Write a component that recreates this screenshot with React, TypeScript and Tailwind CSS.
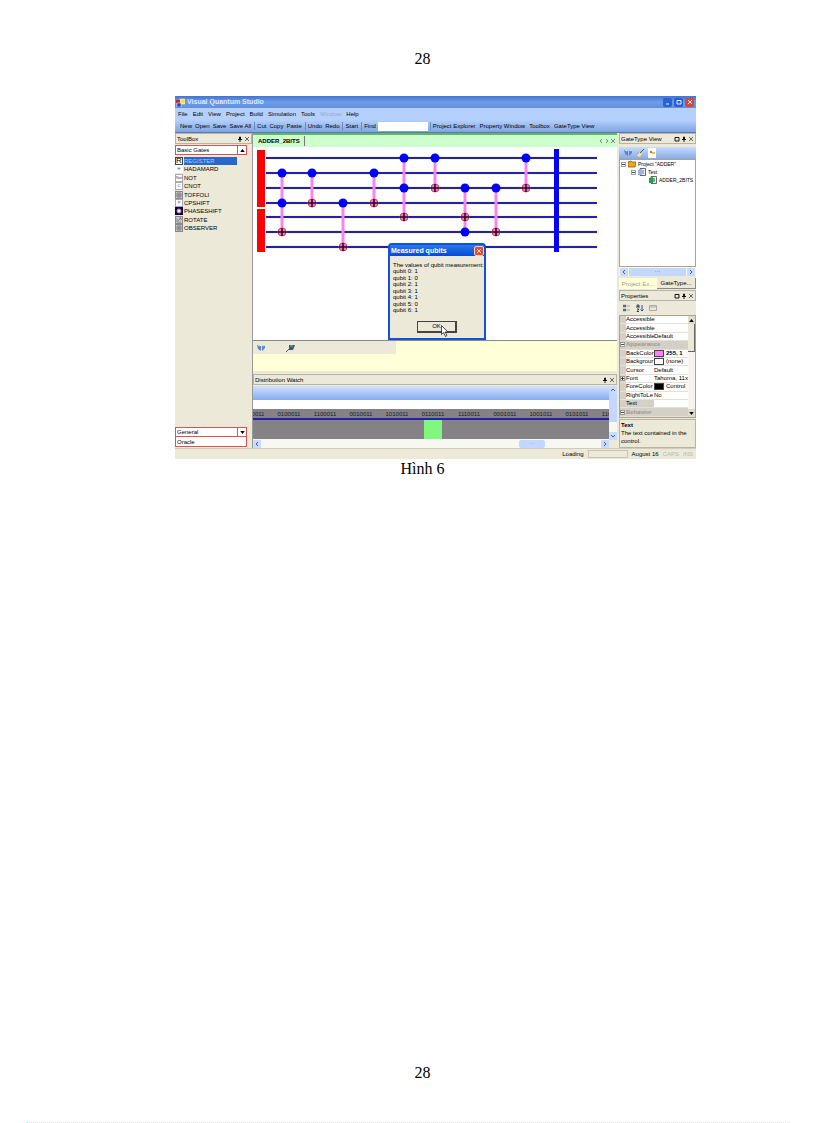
import type { ReactNode } from "react";
import clsx from "clsx";

const MENU = ["File", "Edit", "View", "Project", "Build", "Simulation", "Tools", "Window", "Help"];

const TOOLBAR_LEFT = [
  ["New", "Open", "Save", "Save All"],
  ["Cut", "Copy", "Paste"],
  ["Undo", "Redo"],
  ["Start"],
];

const TOOLBAR_RIGHT = ["Project Explorer", "Property Window", "Toolbox", "GateType View"];

const GATES = [
  { name: "REGISTER", icon: "R" },
  { name: "HADAMARD", icon: "H" },
  { name: "NOT", icon: "Not" },
  { name: "CNOT", icon: "C" },
  { name: "TOFFOLI", icon: "grid" },
  { name: "CPSHIFT", icon: "P" },
  { name: "PHASESHIFT", icon: "phase" },
  { name: "ROTATE", icon: "rotate" },
  { name: "OBSERVER", icon: "grid" },
];

const WIRES = [11, 26, 41, 56, 70, 85, 100];

// column x, control wires, target wires
const COLUMNS = [
  { x: 29, dots: [1, 3], targets: [5] },
  { x: 59, dots: [1], targets: [3] },
  { x: 90, dots: [3], targets: [6] },
  { x: 121, dots: [1], targets: [3] },
  { x: 151, dots: [0, 2], targets: [4] },
  { x: 182, dots: [0], targets: [2] },
  { x: 212, dots: [2, 5], targets: [4] },
  { x: 243, dots: [2], targets: [5] },
  { x: 273, dots: [0], targets: [2] },
];

const STATES = [
  "1000011",
  "0100011",
  "1100011",
  "0010011",
  "1010011",
  "0110011",
  "1110011",
  "0001011",
  "1001011",
  "0101011",
  "1101011",
];

const QUBITS = [1, 0, 1, 1, 1, 0, 1];

type Property = { name: string; value?: string; swatch?: string; group?: boolean; expand?: boolean; selected?: boolean };

const PROPERTIES: Property[] = [
  { name: "Accessible" },
  { name: "Accessible" },
  { name: "Accessible", value: "Default" },
  { name: "Appearance", group: true, expand: true },
  { name: "BackColor", value: "255, 1", swatch: "bg-[#ff80ff]" },
  { name: "Backgrour", value: "(none)", swatch: "bg-white" },
  { name: "Cursor", value: "Default" },
  { name: "Font", value: "Tahoma, 11x", expand: true },
  { name: "ForeColor", value: "Control", swatch: "bg-black" },
  { name: "RightToLe", value: "No" },
  { name: "Text", selected: true },
  { name: "Behavior", group: true, expand: true },
];

function GateIcon({ icon }: { icon: string }) {
  if (icon === "phase") {
    return (
      <svg className="size-2 shrink-0" viewBox="0 0 8 8" aria-hidden="true">
        <rect width="8" height="8" fill="#180030" />
        <circle cx="4" cy="4" r="2" fill="#fff" stroke="#b080e0" />
      </svg>
    );
  }
  if (icon === "grid" || icon === "rotate") {
    return (
      <svg className="size-2 shrink-0" viewBox="0 0 8 8" aria-hidden="true">
        <rect x=".5" y=".5" width="7" height="7" fill="#d0d0d0" stroke="#888" />
        <path d={icon === "grid" ? "M1 3h6M1 5h6M3 1v6M5 1v6" : "M2 6V2M2 6h4M3 5l3-3M4 2h2v2"} stroke="#666" strokeWidth=".7" fill="none" />
      </svg>
    );
  }
  return (
    <span
      className={clsx(
        "flex size-2 shrink-0 items-center justify-center bg-white",
        icon === "R" ? "border border-[#444] text-[8px] leading-[8px]" : "text-[4px] leading-[8px] text-[#444]",
        icon !== "R" && icon !== "H" && "border border-[#a8a8b8]",
      )}
    >
      {icon}
    </span>
  );
}

function Glyph({ kind }: { kind: string }) {
  const paths: Record<string, string> = {
    close: "M1 1l4 4M5 1l-4 4",
    pin: "M2.500 1h1v2h-1zM1 3.500h4M3 3.500V6",
    square: "M1 1.500h4v3.500H1z",
    left: "M4 1L2 3l2 2",
    right: "M2 1l2 2-2 2",
    up: "M1 4l2-2 2 2",
    down: "M1 2l2 2 2-2",
    min: "M1 5h3",
  };
  return (
    <svg className="size-[6px] shrink-0" viewBox="0 0 6 6" fill="none" stroke="currentColor" strokeWidth=".9" aria-hidden="true">
      <path d={paths[kind]} />
    </svg>
  );
}

function Triangle({ up }: { up?: boolean }) {
  return (
    <svg className="h-[3px] w-[5px]" viewBox="0 0 6 4" aria-hidden="true">
      <path d={up ? "M3 0l3 4H0z" : "M0 0h6L3 4z"} />
    </svg>
  );
}

function IconButton({ label, kind, className }: { label: string; kind: string; className?: string }) {
  return (
    <button type="button" aria-label={label} className={clsx("flex items-center justify-center", className)}>
      <Glyph kind={kind} />
    </button>
  );
}

function PanelHeader({ title, square }: { title: string; square?: boolean }) {
  return (
    <header className="flex h-[11px] shrink-0 items-center gap-px border border-[#b8b4a4] bg-[#ece9d8] px-px">
      <h2 className="flex-1">{title}</h2>
      {square && <IconButton label="Maximize" kind="square" />}
      <IconButton label="Pin" kind="pin" />
      <IconButton label="Close" kind="close" className="text-[#555]" />
    </header>
  );
}

function Separator() {
  return <span className="h-2 w-px bg-[#6a8cc8]" />;
}

function MagnetIcon() {
  return (
    <svg className="h-2 w-[9px]" viewBox="0 0 9 8" aria-hidden="true">
      <path d="M0 1l4 1v5L1 5zM5 2l3-1v3L5 7z" fill="#5a86c8" />
      <path d="M1 1l2 1M6 2l2-1" stroke="#dbe8ff" />
    </svg>
  );
}

function TitleBar() {
  return (
    <div className="flex h-3 items-center bg-linear-to-b from-[#4274d0] via-[#6c9ce8] to-[#6290dc] px-px">
      <svg className="size-[9px] shrink-0" viewBox="0 0 9 9" aria-hidden="true">
        <rect x="4" y="1" width="5" height="5" fill="#ffe040" stroke="#fff" strokeWidth=".5" />
        <rect y="2" width="4" height="3" fill="#d02020" />
        <rect x="1" y="5" width="4" height="4" fill="#1840c0" stroke="#fff" strokeWidth=".5" />
      </svg>
      <h1 className="flex-1 pl-[2px] text-[7px] leading-[12px] font-bold text-[#dce8ff]">Visual Quantum Studio</h1>
      <div className="flex gap-[2px] pr-px text-white">
        <IconButton label="Minimize" kind="min" className="size-[9px] rounded-xs bg-[#2860d8]" />
        <IconButton label="Restore" kind="square" className="size-[9px] rounded-xs bg-[#2860d8]" />
        <IconButton label="Close" kind="close" className="size-[9px] rounded-xs bg-[#d84830]" />
      </div>
    </div>
  );
}

function ToolButton({ children }: { children: ReactNode }) {
  return (
    <button type="button" className="whitespace-nowrap">
      {children}
    </button>
  );
}

function Toolbar() {
  return (
    <div className="flex h-[13px] items-center gap-[2px] border-b border-[#5878b8] bg-linear-to-b from-[#b4d0fc] to-[#80a4e4] pl-[5px]">
      {TOOLBAR_LEFT.map((group) => (
        <div key={group[0]} className="flex items-center gap-[3px]">
          {group.map((name) => (
            <ToolButton key={name}>{name}</ToolButton>
          ))}
          <Separator />
        </div>
      ))}
      <label htmlFor="find">Find</label>
      <input id="find" className="h-[9px] w-[50px] bg-white px-px outline-none" />
      <Separator />
      <div className="flex gap-1">
        {TOOLBAR_RIGHT.map((name) => (
          <ToolButton key={name}>{name}</ToolButton>
        ))}
      </div>
    </div>
  );
}

function ToolBox() {
  return (
    <aside className="flex w-[78px] shrink-0 flex-col border-r border-[#999]">
      <PanelHeader title="ToolBox" />
      <div className="mt-px mr-[5px] flex h-[10px]">
        <button type="button" className="flex-1 border border-[#e05050] bg-white pl-px text-left leading-[8px]">Basic Gates</button>
        <button type="button" aria-label="Scroll up" className="flex w-[9px] items-center justify-center border border-l-0 border-[#e05050] bg-white">
          <Triangle up />
        </button>
      </div>
      <ul className="mt-[2px] mr-[15px] flex h-[75px] flex-col justify-between">
        {GATES.map(({ name, icon }, i) => (
          <li key={name}>
            <button type="button" className="flex w-full items-center gap-px text-left leading-[8px]">
              <GateIcon icon={icon} />
              <span className={clsx("flex-1", i === 0 && "bg-[#2868c8] text-[#a8ccff]")}>{name}</span>
            </button>
          </li>
        ))}
      </ul>
      <div className="mt-auto mr-[5px] flex h-[10px]">
        <button type="button" className="flex-1 border border-[#e05050] bg-white pl-px text-left leading-[8px]">General</button>
        <button type="button" aria-label="Scroll down" className="flex w-[9px] items-center justify-center border border-l-0 border-[#e05050] bg-white">
          <Triangle />
        </button>
      </div>
      <button type="button" className="mr-[5px] mb-px h-[10px] border border-t-0 border-[#e05050] bg-white pl-px text-left leading-[8px]">
        Oracle
      </button>
    </aside>
  );
}

function Circuit() {
  return (
    <svg className="h-[193px] w-[364px]" viewBox="0 0 364 193" role="img" aria-label="Two bit adder circuit">
      {WIRES.map((y) => (
        <g key={y}>
          <path d={`M13 ${y}h331`} stroke="#f8f6b8" strokeWidth="4" />
          <path d={`M13 ${y}h331`} stroke="#2020b8" strokeWidth="2" />
        </g>
      ))}
      <path d="M4 3h8v57H4zM4 62h8v43H4z" fill="#f00" />
      {COLUMNS.map(({ x, dots, targets }) => {
        const ys = [...dots, ...targets].map((w) => WIRES[w]);
        return (
          <g key={x}>
            <path d={`M${x} ${Math.min(...ys)}V${Math.max(...ys)}`} stroke="#f884f4" strokeWidth="3" />
            {dots.map((w) => (
              <circle key={w} cx={x} cy={WIRES[w]} r="4.5" fill="#00f" />
            ))}
            {targets.map((w) => (
              <g key={w}>
                <circle cx={x} cy={WIRES[w]} r="4" fill="#f07cc0" stroke="#e83858" />
                <path d={`M${x - 4} ${WIRES[w]}h8M${x} ${WIRES[w] - 4}v8`} stroke="#180828" strokeWidth="1.5" />
              </g>
            ))}
          </g>
        );
      })}
      <path d="M301 2h5v103h-5z" fill="#00f" />
    </svg>
  );
}

function MeasuredDialog() {
  return (
    <div
      role="dialog"
      aria-labelledby="dialog-title"
      className="absolute top-[96px] left-[135px] h-[97px] w-[98px] rounded-t-sm border-2 border-[#1450d8] bg-[#ece9d8]"
    >
      <div className="flex h-[11px] items-center bg-linear-to-b from-[#2878f0] to-[#0848d0] pl-px">
        <h2 id="dialog-title" className="flex-1 text-[7px] leading-[11px] font-bold text-white">Measured qubits</h2>
        <IconButton label="Close" kind="close" className="size-[10px] rounded-xs border border-[#ffc8b8] bg-[#e05030] text-white" />
      </div>
      <div className="flex h-[57px] flex-col justify-between pt-[6px] pl-[3px] leading-[6px] whitespace-nowrap">
        <p>The values of qubit measurement:</p>
        {QUBITS.map((value, i) => (
          <p key={i}>
            qubit {i}: {value}
          </p>
        ))}
      </div>
      <button type="button" className="mx-auto mt-2 block h-3 w-10 border border-r-2 border-b-2 border-[#444] bg-[#ece9d8] leading-[9px]">
        OK
      </button>
      <svg className="absolute top-[80px] left-[51px] h-3 w-2" viewBox="0 0 8 12" aria-hidden="true">
        <path d="M.5.5v9l2-2 2 4 1.500-1-2-3.500H7z" fill="#fff" stroke="#222" strokeWidth=".8" />
      </svg>
    </div>
  );
}

function DistributionWatch() {
  return (
    <section className="flex flex-1 flex-col">
      <PanelHeader title="Distribution Watch" />
      <div className="flex flex-1 pt-px">
        <div className="flex min-w-0 flex-1 flex-col">
          <div className="h-[14px] bg-linear-to-b from-[#d0e2ff] to-[#88acec]" />
          <div className="h-[9px] bg-white" />
          <div className="flex h-[30px] overflow-hidden bg-[#848284]">
            <div className="-ml-[18px] flex">
              {STATES.map((state) => (
                <div key={state} className="flex w-9 shrink-0 flex-col items-center">
                  <span className="h-[9px] leading-[11px] text-[#202020]">{state}</span>
                  <span className="h-[2px] w-full shrink-0 bg-[#2020b8]" />
                  {state === "0110011" && <span className="w-[18px] flex-1 bg-[#80f880]" />}
                </div>
              ))}
            </div>
          </div>
          <div className="flex flex-1 items-center justify-between bg-[#f8f8f2]">
            <IconButton label="Scroll left" kind="left" className="size-2 bg-[#c8dcff] text-[#345090]" />
            <span className="mr-14 ml-auto h-2 w-[26px] rounded-xs bg-[#c4d8ff] text-center leading-[7px] text-[#7088c0]">···</span>
            <IconButton label="Scroll right" kind="right" className="size-2 bg-[#c8dcff] text-[#345090]" />
          </div>
        </div>
        <div className="mb-2 flex w-2 flex-col items-center bg-[#f8f8f2] text-[#345090]">
          <IconButton label="Scroll up" kind="up" className="size-2 bg-[#c8dcff]" />
          <span className="h-7 w-full bg-[#c4d8ff]" />
          <IconButton label="Scroll down" kind="down" className="mt-auto size-2 bg-[#c8dcff]" />
        </div>
      </div>
    </section>
  );
}

function Workspace() {
  return (
    <main className="flex min-w-0 flex-1 flex-col">
      <div className="flex h-[14px] items-center border-t-2 border-[#60b860] bg-[#ccffcc] pr-px">
        <button type="button" className="h-[10px] border-r border-[#777] pr-1 pl-[5px] leading-[10px] font-bold">ADDER_2BITS</button>
        <div className="ml-auto flex text-[#777]">
          <IconButton label="Previous" kind="left" />
          <IconButton label="Next" kind="right" />
          <IconButton label="Close" kind="close" />
        </div>
      </div>
      <div className="relative h-[193px] overflow-hidden bg-white">
        <Circuit />
        <MeasuredDialog />
      </div>
      <div className="h-[31px] border-t border-[#888] bg-[#ffffd8]">
        <div className="flex h-[13px] w-[143px] items-center gap-5 bg-[#ece9d8] pl-1">
          <MagnetIcon />
          <svg className="h-2 w-[9px]" viewBox="0 0 9 8" aria-hidden="true">
            <path d="M3 1h6l-2 5H3z" fill="#40586c" />
            <path d="M0 8l4-4" stroke="#555" />
            <path d="M4 2h3" stroke="#58c0e0" />
          </svg>
        </div>
      </div>
      <div className="h-[3px]" />
      <DistributionWatch />
    </main>
  );
}

function TreeLine({ icon, children }: { icon: string; children: ReactNode }) {
  return (
    <>
      <svg className="size-2 shrink-0" viewBox="0 0 8 8" aria-hidden="true">
        {icon === "folder" ? (
          <path d="M0 2l3-1 1 1h4L7 7H0z" fill="#f0a818" stroke="#704800" strokeWidth=".7" />
        ) : (
          <>
            <path d="M2 .5h5.500v7H2z" fill="#e8f0ff" stroke="#444" strokeWidth=".8" />
            <path d="M0 2l4-1v6L0 7z" fill={icon === "page" ? "#88b8f0" : "#28a048"} />
            <path d="M5 2v4" stroke={icon === "page" ? "#d05050" : "#205020"} />
          </>
        )}
      </svg>
      <span className="whitespace-nowrap">{children}</span>
    </>
  );
}

function Expander({ plus }: { plus?: boolean }) {
  return (
    <svg className="size-[5px] shrink-0" viewBox="0 0 5 5" aria-hidden="true">
      <rect x=".5" y=".5" width="4" height="4" fill="#fff" stroke="#888" strokeWidth=".8" />
      <path d={plus ? "M1 2.500h3M2.500 1v3" : "M1 2.500h3"} stroke="#000" strokeWidth=".7" />
    </svg>
  );
}

function GateTypeView() {
  return (
    <section>
      <PanelHeader title="GateType View" square />
      <div className="mt-[3px] flex h-3 items-center gap-[3px] bg-linear-to-b from-[#c8dcff] to-[#86aae8] pl-[5px]">
        <MagnetIcon />
        <svg className="h-2 w-[9px]" viewBox="0 0 9 8" aria-hidden="true">
          <path d="M1 7l2-4 3 2-2 3z" fill="#f0e0a0" />
          <path d="M4 4l4-4" stroke="#555" />
          <path d="M1 5l2-2" stroke="#e09030" />
        </svg>
        <span className="flex h-[10px] w-2 items-center justify-center bg-white">
          <svg className="size-[6px]" viewBox="0 0 6 6" aria-hidden="true">
            <path d="M1 1h2v2H1z" fill="#e06040" />
            <path d="M3 2h3v2H3z" fill="#f0c040" />
          </svg>
        </span>
      </div>
      <div className="h-[108px] border border-[#a8a490] bg-white pl-px">
        <ul className="text-[5px] leading-[8px]">
          <li className="flex items-center gap-[2px]">
            <Expander />
            <TreeLine icon="folder">Project "ADDER"</TreeLine>
          </li>
          <li className="flex items-center gap-[2px] pl-[10px]">
            <Expander />
            <TreeLine icon="page">Test</TreeLine>
          </li>
          <li className="flex items-center gap-[2px] pl-7">
            <TreeLine icon="circuit">ADDER_2BITS</TreeLine>
          </li>
        </ul>
      </div>
      <div className="flex h-[9px] items-center bg-[#f8f8f2] px-px text-[#345090]">
        <IconButton label="Scroll left" kind="left" className="size-2 bg-[#c8dcff]" />
        <span className="mx-px h-2 flex-1 bg-[#c4d8ff] text-center leading-[7px]">···</span>
        <IconButton label="Scroll right" kind="right" className="size-2 bg-[#c8dcff]" />
      </div>
      <div className="flex h-[14px] pt-[2px] pb-px">
        <button type="button" className="w-[38px] bg-[#ffffd8] text-[#999]">Project Ex...</button>
        <button type="button" className="flex-1 border-r border-b border-[#888] bg-[#ece9d8]">GateType...</button>
      </div>
    </section>
  );
}

function Properties() {
  return (
    <section className="flex flex-1 flex-col">
      <PanelHeader title="Properties" square />
      <div className="flex h-[14px] items-center gap-[5px] pl-1">
        <svg className="size-2" viewBox="0 0 8 8" aria-hidden="true">
          <path d="M0 1h3v2H0zM0 5h3v2H0zM4 2h3M4 6h3" fill="#667" stroke="#667" strokeWidth=".5" />
        </svg>
        <svg className="size-2" viewBox="0 0 8 8" aria-hidden="true">
          <path d="M1 4V1h2v3M1 2.500h2M1 5h2L1 7.500h2" fill="none" stroke="#333" strokeWidth=".9" />
          <path d="M6 1v6M4.500 5.500L6 7l1.500-1.500" fill="none" stroke="#2848b0" />
        </svg>
        <svg className="size-2" viewBox="0 0 8 8" aria-hidden="true">
          <path d="M.5 1.500h7v5h-7zM.5 3h7" fill="none" stroke="#aaa" />
        </svg>
      </div>
      <div className="flex h-[103px] border border-[#a8a490]">
        <div className="min-w-0 flex-1">
          <table className="h-full w-full table-fixed border-collapse bg-white leading-[7px] whitespace-nowrap">
            <colgroup>
              <col className="w-[6px]" />
              <col className="w-[28px]" />
              <col />
            </colgroup>
            <tbody>
              {PROPERTIES.map((p, i) => (
                <tr key={i} className={clsx("border-b border-[#e4e0d4]", p.group && "bg-[#d4d0c8] text-[#999]")}>
                  <td className="bg-[#d4d0c8] p-0">{p.expand && <Expander plus={!p.group} />}</td>
                  <th scope="row" className={clsx("p-0 text-left", p.group ? "font-bold" : "font-normal", p.selected && "bg-[#d4d0c8]")} colSpan={p.group ? 2 : 1}>
                    {p.name}
                  </th>
                  {!p.group && (
                    <td className="p-0">
                      <span className="flex items-center gap-[2px]">
                        {p.swatch && <span className={clsx("h-[7px] w-[10px] shrink-0 border border-[#444]", p.swatch)} />}
                        <span className={p.name === "BackColor" ? "font-bold" : undefined}>{p.value}</span>
                      </span>
                    </td>
                  )}
                </tr>
              ))}
            </tbody>
          </table>
        </div>
        <div className="flex w-[7px] shrink-0 flex-col bg-[#f6f4ec]">
          <button type="button" aria-label="Scroll up" className="flex h-2 items-center justify-center bg-[#dedacc]">
            <Triangle up />
          </button>
          <span className="h-7 border-r border-b border-[#666] bg-[#ece9d8]" />
          <button type="button" aria-label="Scroll down" className="mt-auto flex h-2 items-center justify-center bg-[#dedacc]">
            <Triangle />
          </button>
        </div>
      </div>
      <div className="mt-px flex-1 border border-[#b8b4a4] px-px pt-px leading-[8px]">
        <h3 className="font-bold">Text</h3>
        <p>The text contained in the control.</p>
      </div>
    </section>
  );
}

function StatusBar() {
  return (
    <footer className="flex h-[11px] items-center justify-end gap-1 border-t border-[#d0ccbc] pr-[3px]">
      <span>Loading</span>
      <span className="h-2 w-10 border border-[#c8c4b4]" />
      <span>August 16</span>
      <span className="text-[#bbb7a8]">CAPS</span>
      <span className="text-[#bbb7a8]">INS</span>
    </footer>
  );
}

export default function App() {
  return (
    <div className="flex min-h-screen flex-col bg-white font-['Liberation_Serif',serif] text-[16px] leading-[20px] text-black">
      <header className="pt-[49px] pl-[29px] text-center">28</header>
      <figure className="mt-[27px]">
        <div className="mr-[120px] ml-[175px] bg-[#ece9d8] font-['Liberation_Sans',sans-serif] text-[6px] leading-[8px]">
          <TitleBar />
          <nav className="flex h-3 items-center gap-[5px] bg-[#b4d0fc] pl-[3px]">
            {MENU.map((name) => (
              <button key={name} type="button" className={name === "Window" ? "text-[#94acd8]" : undefined}>
                {name}
              </button>
            ))}
          </nav>
          <Toolbar />
          <div className="flex h-[315px]">
            <ToolBox />
            <Workspace />
            <div className="ml-[2px] flex w-[77px] shrink-0 flex-col">
              <GateTypeView />
              <Properties />
            </div>
          </div>
          <StatusBar />
        </div>
        <figcaption className="pl-[29px] text-center">Hình 6</figcaption>
      </figure>
      <footer className="mt-auto">
        <p className="pb-[39px] pl-[29px] text-center">28</p>
        <div className="mx-[26px] border-t border-dotted border-[#a8f4f4]" />
      </footer>
    </div>
  );
}
